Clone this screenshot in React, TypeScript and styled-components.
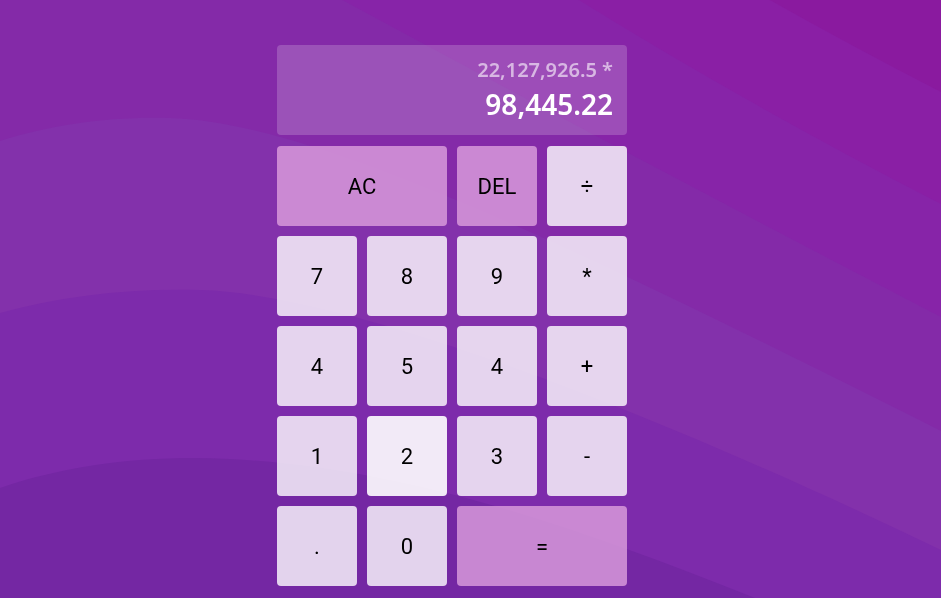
import React from 'react';
import styled, { createGlobalStyle, css } from 'styled-components';

const GlobalStyle = createGlobalStyle`
  html,
  body {
    margin: 0;
    padding: 0;
    background: #7427a3;
    overflow: hidden;
  }
  * {
    box-sizing: border-box;
  }
`;

const Backdrop = styled.svg`
  position: fixed;
  inset: 0;
  width: 100vw;
  height: 100vh;
  z-index: 0;
`;

const Page = styled.main`
  position: relative;
  z-index: 1;
  min-height: 100vh;
  display: flex;
  justify-content: center;
  align-items: flex-start;
  padding: 45px 37px 0 0;
`;

const Calculator = styled.div`
  width: 350px;
  display: flex;
  flex-direction: column;
  gap: 11px;
`;

const Output = styled.div`
  height: 90px;
  padding: 12px 14px 14px;
  border-radius: 4px;
  background: rgba(255, 255, 255, 0.19);
  display: flex;
  flex-direction: column;
  align-items: flex-end;
  gap: 4px;
  font-family: 'Noto Sans', 'Open Sans', sans-serif;
`;

const PreviousOperand = styled.div`
  font-size: 20px;
  line-height: 26px;
  font-weight: 600;
  color: rgba(255, 255, 255, 0.6);
`;

const CurrentOperand = styled.div`
  font-size: 28px;
  line-height: 34px;
  font-weight: 600;
  color: #ffffff;
`;

const Keypad = styled.div`
  display: grid;
  grid-template-columns: repeat(4, 80px);
  grid-auto-rows: 80px;
  gap: 10px;
`;

type Variant = 'plain' | 'accent' | 'hover';

const Key = styled.button<{ $wide?: boolean; $variant?: Variant }>`
  border: none;
  outline: none;
  border-radius: 4px;
  cursor: pointer;
  font-family: Roboto, 'Liberation Sans', sans-serif;
  font-size: 22px;
  color: #000000;
  display: flex;
  align-items: center;
  justify-content: center;
  padding: 0;
  background: rgba(255, 255, 255, 0.8);
  ${(p) =>
    p.$wide &&
    css`
      grid-column: span 2;
    `}
  ${(p) =>
    p.$variant === 'accent' &&
    css`
      background: rgba(221, 160, 221, 0.8);
    `}
  ${(p) =>
    p.$variant === 'hover' &&
    css`
      background: rgba(255, 255, 255, 0.9);
    `}
`;

const keys: { label: string; wide?: boolean; variant?: Variant }[] = [
  { label: 'AC', wide: true, variant: 'accent' },
  { label: 'DEL', variant: 'accent' },
  { label: '÷' },
  { label: '7' },
  { label: '8' },
  { label: '9' },
  { label: '*' },
  { label: '4' },
  { label: '5' },
  { label: '4' },
  { label: '+' },
  { label: '1' },
  { label: '2', variant: 'hover' },
  { label: '3' },
  { label: '-' },
  { label: '.' },
  { label: '0' },
  { label: '=', wide: true, variant: 'accent' },
];

// layered waves, painted from the bottom-left colour up to the top-right one
const waves = [
  { fill: '#7d2bab', d: 'M0 488 C 70 464, 150 455, 230 459 C 400 468, 560 520, 760 600 L941 600 L941 0 L0 0 Z' },
  { fill: '#8331ab', d: 'M0 313 C 60 296, 130 288, 200 290 C 350 294, 650 410, 941 550 L941 0 L0 0 Z' },
  { fill: '#842aa8', d: 'M0 141 C 50 125, 110 116, 170 118 C 320 122, 600 260, 941 431 L941 0 L0 0 Z' },
  { fill: '#8724a8', d: 'M250 -50 Q 600 140 941 317 L941 -50 Z' },
  { fill: '#8a1fa5', d: 'M500 -50 Q 700 80 941 204 L941 -50 Z' },
  { fill: '#8a1a9f', d: 'M700 -40 Q 820 30 941 92 L941 -40 Z' },
];

const App = () => {
  return (
    <>
      <GlobalStyle />
      <Backdrop viewBox='0 0 941 598' preserveAspectRatio='none'>
        <rect width='941' height='598' fill='#7427a3' />
        {waves.map((w, i) => (
          <path key={i} d={w.d} fill={w.fill} />
        ))}
      </Backdrop>
      <Page>
        <Calculator>
          <Output>
            <PreviousOperand>22,127,926.5 *</PreviousOperand>
            <CurrentOperand>98,445.22</CurrentOperand>
          </Output>
          <Keypad>
            {keys.map((k, i) => (
              <Key key={i} $wide={k.wide} $variant={k.variant}>
                {k.label}
              </Key>
            ))}
          </Keypad>
        </Calculator>
      </Page>
    </>
  );
};

export default App;
